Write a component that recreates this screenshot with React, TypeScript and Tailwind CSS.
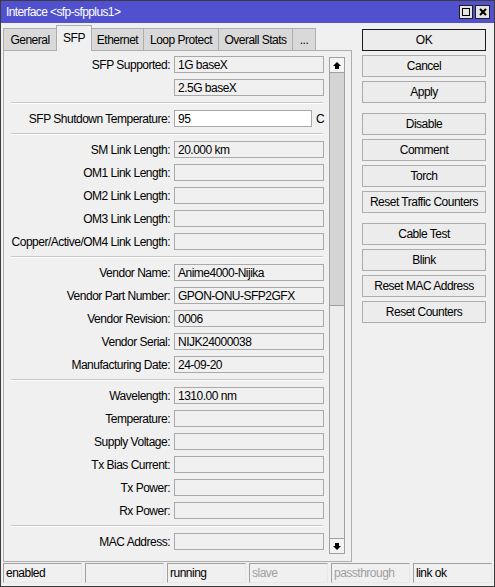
import React from "react";

type Field = { label?: string; value?: string; unit?: string; white?: boolean };

const sections: Field[][] = [
  [{ label: "SFP Supported:", value: "1G baseX" }, { value: "2.5G baseX" }],
  [{ label: "SFP Shutdown Temperature:", value: "95", unit: "C", white: true }],
  [
    { label: "SM Link Length:", value: "20.000 km" },
    { label: "OM1 Link Length:" },
    { label: "OM2 Link Length:" },
    { label: "OM3 Link Length:" },
    { label: "Copper/Active/OM4 Link Length:" },
  ],
  [
    { label: "Vendor Name:", value: "Anime4000-Nijika" },
    { label: "Vendor Part Number:", value: "GPON-ONU-SFP2GFX" },
    { label: "Vendor Revision:", value: "0006" },
    { label: "Vendor Serial:", value: "NIJK24000038" },
    { label: "Manufacturing Date:", value: "24-09-20" },
  ],
  [
    { label: "Wavelength:", value: "1310.00 nm" },
    { label: "Temperature:" },
    { label: "Supply Voltage:" },
    { label: "Tx Bias Current:" },
    { label: "Tx Power:" },
    { label: "Rx Power:" },
  ],
  [{ label: "MAC Address:" }],
];

const tabs = [
  { name: "General", w: "w-[54px]" },
  { name: "SFP", w: "w-[36px]", active: true },
  { name: "Ethernet", w: "w-[53px]" },
  { name: "Loop Protect", w: "w-[76px]" },
  { name: "Overall Stats", w: "w-[75px]" },
  { name: "...", w: "w-[24px]" },
];

const buttonGroups = [
  ["OK", "Cancel", "Apply"],
  ["Disable", "Comment", "Torch", "Reset Traffic Counters"],
  ["Cable Test", "Blink", "Reset MAC Address", "Reset Counters"],
];

const status = [
  { text: "enabled" },
  { text: "" },
  { text: "running" },
  { text: "slave", dim: true },
  { text: "passthrough", dim: true },
  { text: "link ok" },
];

function Row({ f }: { f: Field }) {
  return (
    <div className="flex h-[17px] items-center">
      <div className="w-[166px] shrink-0 whitespace-nowrap text-right leading-none">{f.label}</div>
      <div
        className={
          "ml-[4px] flex h-[17px] items-center border border-[#a9a9a9] pl-[3px] leading-none " +
          (f.white ? "w-[138px] bg-white" : "w-[150px] bg-[#f0f0f0]")
        }
      >
        {f.value}
      </div>
      {f.unit && <div className="ml-[4px] leading-none">{f.unit}</div>}
    </div>
  );
}

function Arrow({ down }: { down?: boolean }) {
  return (
    <svg width="8" height="7" viewBox="0 0 8 7" className={down ? "rotate-180" : ""}>
      <path d="M4 0 L8 4 L6 4 L6 7 L2 7 L2 4 L0 4 Z" fill="#000" />
    </svg>
  );
}

export default function App() {
  return (
    <div className="flex h-[587px] w-[495px] flex-col overflow-hidden border border-[#3c3c3c] bg-[#f0f0f0] font-['Liberation_Sans',Arial,sans-serif] text-[12px] tracking-[-0.5px] text-black">
      {/* title bar */}
      <div className="flex h-[22px] shrink-0 items-center bg-[#5151cf] pl-[5px] pr-[4px]">
        <div className="flex-1 text-[12px] tracking-[-0.6px] text-white">Interface &lt;sfp-sfpplus1&gt;</div>
        <div className="flex gap-[2px]">
          <div className="flex h-[14px] w-[14px] items-center justify-center border border-[#1f1f1f] bg-[#e3e3e3]">
            <div className="h-[8px] w-[8px] border-[1.5px] border-black" />
          </div>
          <div className="flex h-[14px] w-[15px] items-center justify-center border border-[#1f1f1f] bg-[#e3e3e3]">
            <svg width="8" height="8" viewBox="0 0 8 8">
              <path d="M1 1 L7 7 M7 1 L1 7" stroke="#000" strokeWidth="2" />
            </svg>
          </div>
        </div>
      </div>

      <div className="flex">
        {/* left column */}
        <div className="ml-[2px] mt-[2px] flex w-[349px] flex-col">
          <div className="flex h-[25px] items-end">
            {tabs.map((t) => (
              <div
                key={t.name}
                className={
                  "-ml-px flex items-center justify-center border border-[#adadad] first:ml-0 " +
                  t.w +
                  (t.active
                    ? " relative z-10 -mb-px h-[26px] border-b-0 bg-[#f0f0f0] pb-[2px]"
                    : " h-[22px] border-b-0 bg-[#d9d9d9]")
                }
              >
                {t.name}
              </div>
            ))}
          </div>
          <div className="flex h-[512px] border border-[#adadad] bg-[#f0f0f0]">
            <div className="flex w-[325px] flex-col gap-[6px] overflow-hidden pt-[5px]">
              {sections.map((sec, i) => (
                <React.Fragment key={i}>
                  {i > 0 && (
                    <div className="ml-[7px] h-[2px] w-[312px] shrink-0 border-t border-b border-t-[#c8c8c8] border-b-white" />
                  )}
                  {sec.map((f, j) => (
                    <Row key={j} f={f} />
                  ))}
                </React.Fragment>
              ))}
            </div>
            {/* scrollbar */}
            <div className="mt-[6px] flex h-[497px] w-[16px] flex-col border border-[#a0a0a0] bg-[#ededed]">
              <div className="flex h-[15px] shrink-0 items-center justify-center border-b border-[#a0a0a0] bg-[#f4f4f4]">
                <Arrow />
              </div>
              <div className="h-[233px] shrink-0 border-b border-[#a0a0a0] bg-[#d4d4d4]" />
              <div className="flex-1" />
              <div className="flex h-[15px] shrink-0 items-center justify-center border-t border-[#a0a0a0] bg-[#f4f4f4]">
                <Arrow down />
              </div>
            </div>
          </div>
        </div>

        {/* right column */}
        <div className="ml-[10px] mt-[6px] flex w-[124px] flex-col gap-[10px]">
          {buttonGroups.map((g, gi) => (
            <div key={gi} className="flex flex-col gap-[4px]">
              {g.map((b) => (
                <div
                  key={b}
                  className={
                    "flex h-[22px] items-center justify-center border bg-[#ececec] " +
                    (b === "OK" ? "border-[#1a1a1a]" : "border-[#adadad]")
                  }
                >
                  {b}
                </div>
              ))}
            </div>
          ))}
        </div>
      </div>

      {/* status bar */}
      <div className="ml-[2px] mt-[1px] flex gap-[3px]">
        {status.map((s, i) => (
          <div
            key={i}
            className={
              "flex h-[20px] w-[79px] items-center border border-t-[#a0a0a0] border-l-[#a0a0a0] border-b-[#e8e8e8] border-r-[#e8e8e8] pl-[2px] " +
              (s.dim ? "text-[#a0a0a0]" : "")
            }
          >
            {s.text}
          </div>
        ))}
      </div>
    </div>
  );
}
